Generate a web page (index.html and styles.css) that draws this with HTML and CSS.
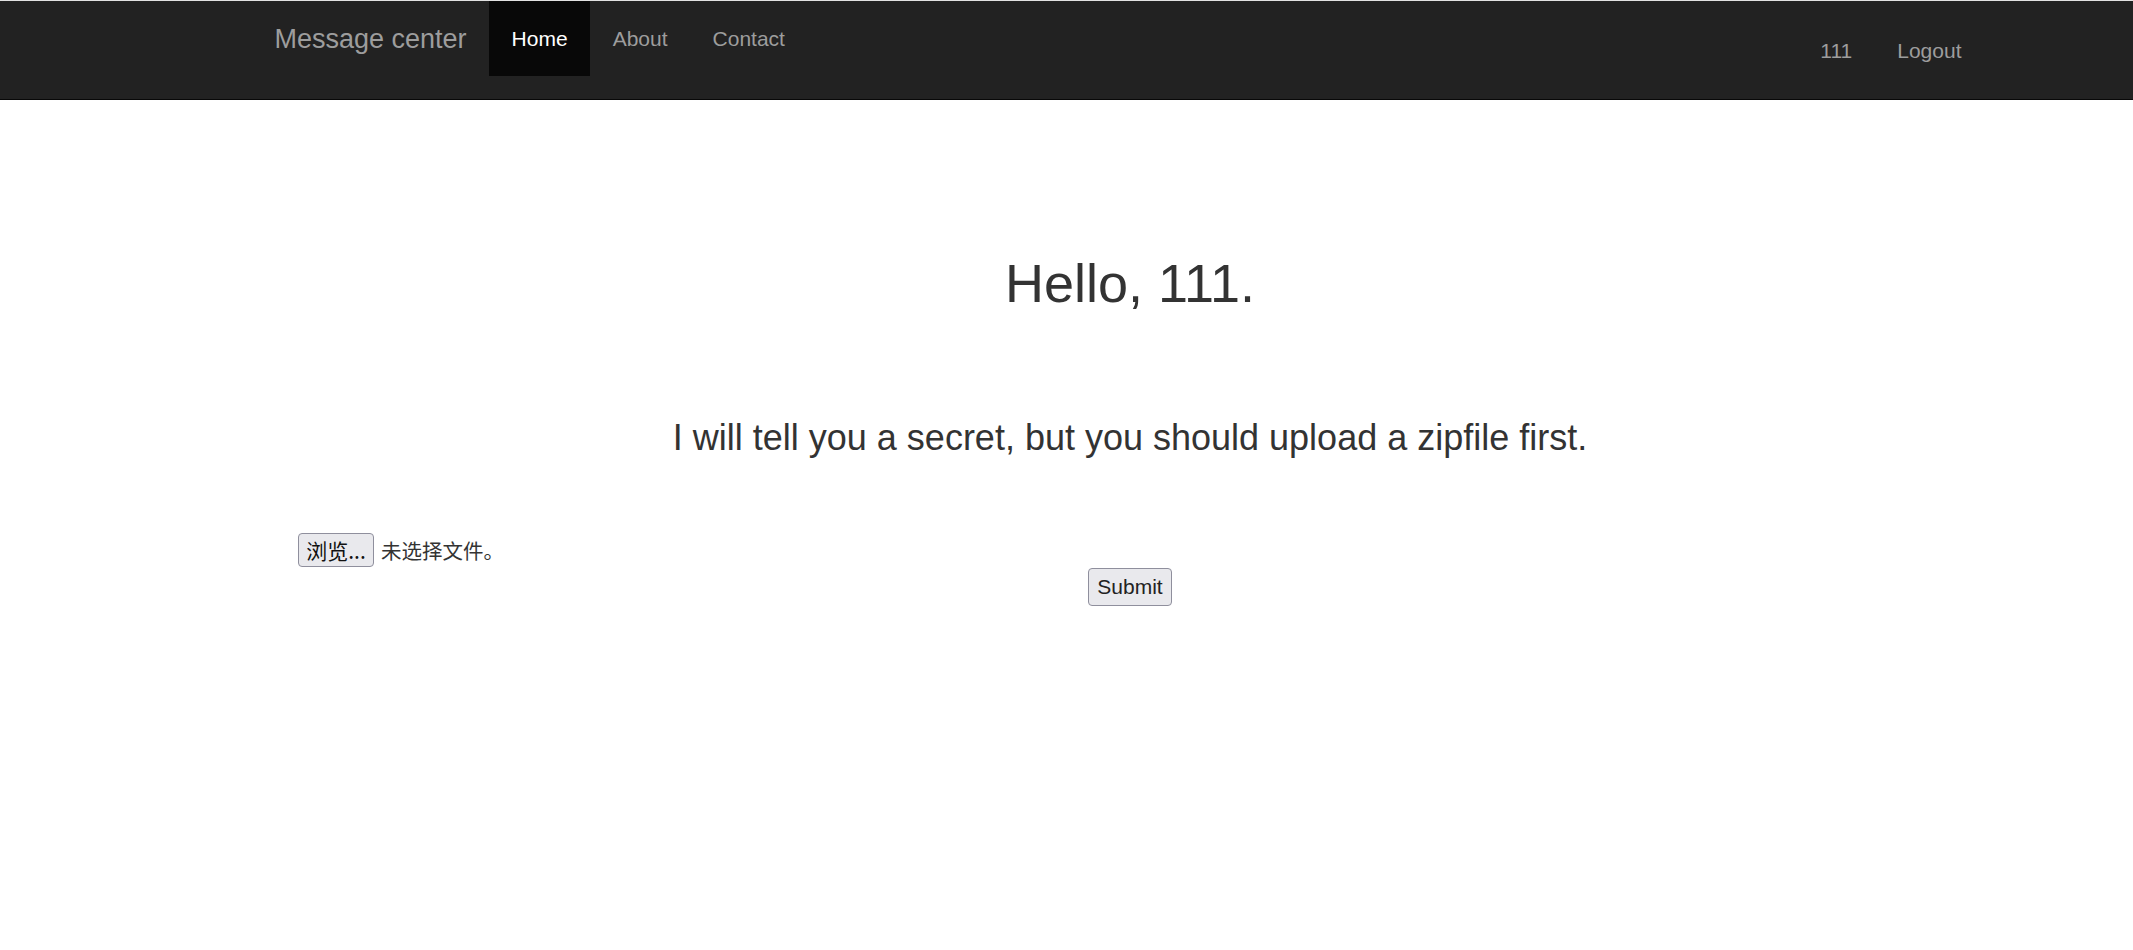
FILE: index.html
```html
<!DOCTYPE html>
<html lang="zh-CN">
<head>
<meta charset="utf-8">
<title>Message center</title>
<link rel="stylesheet" href="styles.css">
</head>
<body>
<nav class="navbar">
  <div class="nav-left">
    <a class="brand" href="#">Message center</a>
    <ul class="nav">
      <li><a class="active" href="#">Home</a></li>
      <li><a href="#">About</a></li>
      <li><a href="#">Contact</a></li>
    </ul>
  </div>
  <ul class="nav nav-right">
    <li><a href="#">111</a></li>
    <li><a href="#">Logout</a></li>
  </ul>
</nav>
<main class="content">
  <h1 class="hello">Hello, 111.</h1>
  <h3 class="lead">I will tell you a secret, but you should upload a zipfile first.</h3>
  <form class="upload">
    <div class="file-row">
      <span class="file-btn">浏览...</span>
      <span class="file-name">未选择文件。</span>
    </div>
    <div class="submit-row">
      <button class="submit" type="button">Submit</button>
    </div>
  </form>
</main>
</body>
</html>
```

FILE: styles.css
```css
html, body {
  margin: 0;
  padding: 0;
  background: #fff;
}
body {
  font-family: "Liberation Sans", Arial, "Noto Sans CJK SC", sans-serif;
  font-size: 21px;
  color: #333;
}
a { text-decoration: none; }

.navbar {
  display: flex;
  justify-content: space-between;
  align-items: flex-start;
  height: 98px;
  background: #222;
  border-top: 1px solid #e2e2e2;
  border-bottom: 1px solid #080808;
  padding-left: 252px;
  padding-right: 149px;
}
.nav-left {
  display: flex;
  align-items: flex-start;
}
.brand {
  display: block;
  font-size: 27px;
  line-height: 30px;
  padding: 22.5px;
  color: #9d9d9d;
}
.nav {
  display: flex;
  list-style: none;
  margin: 0;
  padding: 0;
}
.nav a {
  display: block;
  font-size: 21px;
  line-height: 30px;
  padding: 22.5px;
  color: #9d9d9d;
}
.nav a.active {
  color: #fff;
  background: #080808;
}
.nav-right {
  margin-top: 12px;
}

.content {
  padding-left: 298px;
  padding-right: 171px;
  text-align: center;
}
.hello {
  margin: 153.5px 0 0;
  font-size: 54px;
  line-height: 1.1;
  font-weight: 400;
}
.lead {
  margin: 105.5px 0 0;
  font-size: 36px;
  line-height: 1.1;
  font-weight: 400;
}
.upload {
  margin-top: 75.5px;
}
.file-row {
  display: flex;
  align-items: center;
  gap: 7px;
  height: 34px;
  text-align: left;
}
.file-btn {
  box-sizing: border-box;
  display: inline-flex;
  align-items: center;
  justify-content: center;
  width: 76px;
  height: 34px;
  background: #e9e9ed;
  border: 1px solid #8f8f9d;
  border-radius: 4px;
  color: #111;
  font-family: "Noto Sans CJK SC", sans-serif;
  font-size: 21px;
  line-height: 1;
}
.file-name {
  font-family: "Noto Sans CJK SC", sans-serif;
  font-size: 20.5px;
  color: #333;
  line-height: 1;
}
.submit-row {
  margin-top: 1px;
  text-align: center;
}
.submit {
  box-sizing: border-box;
  width: 84px;
  height: 38px;
  padding: 0;
  background: #e9e9ed;
  border: 1px solid #8f8f9d;
  border-radius: 4px;
  font-family: "Liberation Sans", Arial, sans-serif;
  font-size: 21px;
  line-height: 30px;
  color: #222;
}
```
